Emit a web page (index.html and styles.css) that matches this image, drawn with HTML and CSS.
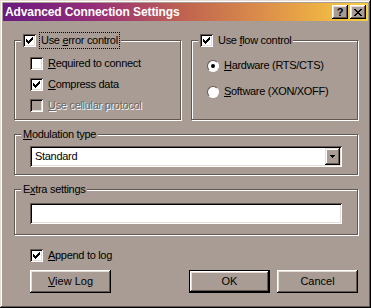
FILE: index.html
```html
<!DOCTYPE html>
<html lang="en">
<head>
  <meta charset="UTF-8"/>
  <title>Advanced Connection Settings</title>
  <link rel="stylesheet" href="styles.css">
</head>
<body>
  <div class="window">
    <div class="titlebar">
      <span class="title">Advanced Connection Settings</span>
      <button class="tbtn help">?</button>
      <button class="tbtn close">
        <svg viewBox="0 0 8 7" width="8" height="7" shape-rendering="crispEdges">
          <path d="M0 0h2v1h-2zM6 0h2v1h-2zM1 1h2v1h-2zM5 1h2v1h-2zM2 2h4v1h-4zM3 3h2v1h-2zM2 4h4v1h-4zM1 5h2v1h-2zM5 5h2v1h-2zM0 6h2v1h-2zM6 6h2v1h-2z"/>
        </svg>
      </button>
    </div>

    <div class="content">
      <div class="top-row">
        <fieldset class="group error-group">
          <legend>
            <label class="check">
              <span class="box"><svg class="tick" viewBox="0 0 13 13"><path d="M9 3h1v1h-1zM8 4h2v1h-2zM3 5h1v1h-1zM7 5h3v1h-3zM3 6h2v1h-2zM6 6h3v1h-3zM3 7h5v1h-5zM4 8h3v1h-3zM5 9h1v1h-1z"/></svg></span>
              <span class="focus">Use <u>e</u>rror control</span>
            </label>
          </legend>
          <label class="check">
            <span class="box"></span>
            <span><u>R</u>equired to connect</span>
          </label>
          <label class="check">
            <span class="box"><svg class="tick" viewBox="0 0 13 13"><path d="M9 3h1v1h-1zM8 4h2v1h-2zM3 5h1v1h-1zM7 5h3v1h-3zM3 6h2v1h-2zM6 6h3v1h-3zM3 7h5v1h-5zM4 8h3v1h-3zM5 9h1v1h-1z"/></svg></span>
            <span><u>C</u>ompress data</span>
          </label>
          <label class="check disabled">
            <span class="box"></span>
            <span><u>U</u>se cellular protocol</span>
          </label>
        </fieldset>

        <fieldset class="group flow-group">
          <legend>
            <label class="check">
              <span class="box"><svg class="tick" viewBox="0 0 13 13"><path d="M9 3h1v1h-1zM8 4h2v1h-2zM3 5h1v1h-1zM7 5h3v1h-3zM3 6h2v1h-2zM6 6h3v1h-3zM3 7h5v1h-5zM4 8h3v1h-3zM5 9h1v1h-1z"/></svg></span>
              <span>Use <u>f</u>low control</span>
            </label>
          </legend>
          <label class="radio">
            <span class="dot checked"></span>
            <span><u>H</u>ardware (RTS/CTS)</span>
          </label>
          <label class="radio">
            <span class="dot"></span>
            <span><u>S</u>oftware (XON/XOFF)</span>
          </label>
        </fieldset>
      </div>

      <fieldset class="group modulation-group">
        <legend><u>M</u>odulation type</legend>
        <div class="combo">
          <span class="combo-text">Standard</span>
          <span class="combo-btn">
            <svg viewBox="0 0 5 3" width="5" height="3" shape-rendering="crispEdges"><path d="M0 0h5v1h-5zM1 1h3v1h-3zM2 2h1v1h-1z"/></svg>
          </span>
        </div>
      </fieldset>

      <fieldset class="group extra-group">
        <legend>E<u>x</u>tra settings</legend>
        <div class="field"></div>
      </fieldset>

      <label class="check append">
        <span class="box"><svg class="tick" viewBox="0 0 13 13"><path d="M9 3h1v1h-1zM8 4h2v1h-2zM3 5h1v1h-1zM7 5h3v1h-3zM3 6h2v1h-2zM6 6h3v1h-3zM3 7h5v1h-5zM4 8h3v1h-3zM5 9h1v1h-1z"/></svg></span>
        <span><u>A</u>ppend to log</span>
      </label>

      <div class="button-row">
        <button class="btn"><u>V</u>iew Log</button>
        <button class="btn default">OK</button>
        <button class="btn">Cancel</button>
      </div>
    </div>
  </div>
</body>
</html>
```

FILE: styles.css
```css
:root {
  --face: #a89c94;
  --light: #e6ddd7;
  --shadow: #625751;
  --dark: #000;
  --hi: #fff;
}

* {
  margin: 0;
  padding: 0;
  box-sizing: border-box;
}

body {
  background: var(--face);
  font-family: "Liberation Sans", sans-serif;
  font-size: 11px;
  letter-spacing: -0.3px;
  line-height: 13px;
  color: #000;
  white-space: nowrap;
}

u {
  text-underline-offset: 1px;
}

.window {
  width: 371px;
  height: 308px;
  padding: 3px;
  background: var(--face);
  box-shadow: inset -1px -1px var(--dark), inset 1px 1px var(--light),
              inset -2px -2px var(--shadow), inset 2px 2px var(--hi);
}

/* Title bar */
.titlebar {
  display: flex;
  align-items: center;
  height: 18px;
  padding: 0 2px;
  background: linear-gradient(to right, #6a1a80 0%, #962e78 25%, #c06450 50%, #e49c48 78%, #f8d040 100%);
}

.title {
  flex: 1;
  color: #fff;
  font-weight: bold;
  font-size: 12px;
  letter-spacing: -0.1px;
}

.tbtn {
  width: 16px;
  height: 14px;
  border: none;
  background: var(--face);
  display: flex;
  align-items: center;
  justify-content: center;
  font-family: "Liberation Sans", sans-serif;
  font-weight: bold;
  font-size: 11px;
  color: #000;
  box-shadow: inset -1px -1px var(--dark), inset 1px 1px var(--hi),
              inset -2px -2px var(--shadow), inset 2px 2px var(--light);
}

.tbtn.close {
  margin-left: 2px;
}

/* Content */
.content {
  padding: 13px 10px 0 11px;
}

.top-row {
  display: flex;
  gap: 10px;
}

.group {
  border: 1px solid var(--shadow);
  box-shadow: 1px 1px 0 var(--hi), inset 1px 1px 0 var(--hi);
  padding: 10px 15px 7px;
  min-width: 0;
}

.group legend {
  margin-left: -9px;
  padding: 0 2px;
  background: var(--face);
  line-height: 13px;
}

.error-group,
.flow-group {
  width: 167px;
  display: flex;
  flex-direction: column;
  gap: 8px;
}

.flow-group {
  padding-top: 12px;
  gap: 13px;
}

.modulation-group {
  margin-top: 8px;
  padding-top: 5px;
}

.extra-group {
  margin-top: 8px;
  padding-top: 7px;
  padding-bottom: 10px;
}

/* Checkboxes */
.check {
  display: flex;
  align-items: center;
  gap: 5px;
  height: 13px;
}

.box {
  width: 13px;
  height: 13px;
  flex: none;
  background: #fff;
  box-shadow: inset 1px 1px var(--shadow), inset -1px -1px var(--hi),
              inset 2px 2px var(--dark), inset -2px -2px var(--light);
}

.tick {
  display: block;
  width: 13px;
  height: 13px;
  shape-rendering: crispEdges;
}

.focus {
  margin: -1px 0 -1px -1px;
  padding: 1px 1px;
  outline: 1px dotted #000;
  outline-offset: 0;
}

.check.disabled {
  color: #73685f;
  text-shadow: 1px 1px 0 var(--hi);
}

.check.disabled .box {
  background: var(--face);
}

/* Radios */
.radio {
  display: flex;
  align-items: center;
  gap: 5px;
  height: 13px;
}

.dot {
  width: 12px;
  height: 12px;
  flex: none;
  border-radius: 50%;
  background: #fff;
  border: 1px solid;
  border-color: var(--shadow) var(--hi) var(--hi) var(--shadow);
  display: flex;
  align-items: center;
  justify-content: center;
}

.dot.checked::after {
  content: "";
  width: 4px;
  height: 4px;
  border-radius: 50%;
  background: #000;
}

/* Combo and edit */
.combo,
.field {
  height: 21px;
  background: #fff;
  box-shadow: inset 1px 1px var(--shadow), inset -1px -1px var(--hi),
              inset 2px 2px var(--dark), inset -2px -2px var(--light);
}

.combo {
  display: flex;
  align-items: center;
  padding: 2px;
}

.combo-text {
  flex: 1;
  padding-left: 3px;
}

.combo-btn {
  width: 15px;
  height: 17px;
  background: var(--face);
  display: flex;
  align-items: center;
  justify-content: center;
  box-shadow: inset -1px -1px var(--dark), inset 1px 1px var(--light),
              inset -2px -2px var(--shadow), inset 2px 2px var(--hi);
}

/* Bottom */
.append {
  margin: 14px 0 0 16px;
}

.button-row {
  display: flex;
  gap: 7px;
  margin-top: 8px;
  padding-left: 16px;
}

.btn {
  width: 81px;
  height: 23px;
  border: none;
  background: var(--face);
  font: inherit;
  color: #000;
  box-shadow: inset -1px -1px var(--dark), inset 1px 1px var(--hi),
              inset -2px -2px var(--shadow), inset 2px 2px var(--light);
}

.btn.default {
  margin-left: auto;
  box-shadow: inset 0 0 0 1px var(--dark), inset -2px -2px var(--dark), inset 2px 2px var(--hi),
              inset -3px -3px var(--shadow), inset 3px 3px var(--light);
}
```
